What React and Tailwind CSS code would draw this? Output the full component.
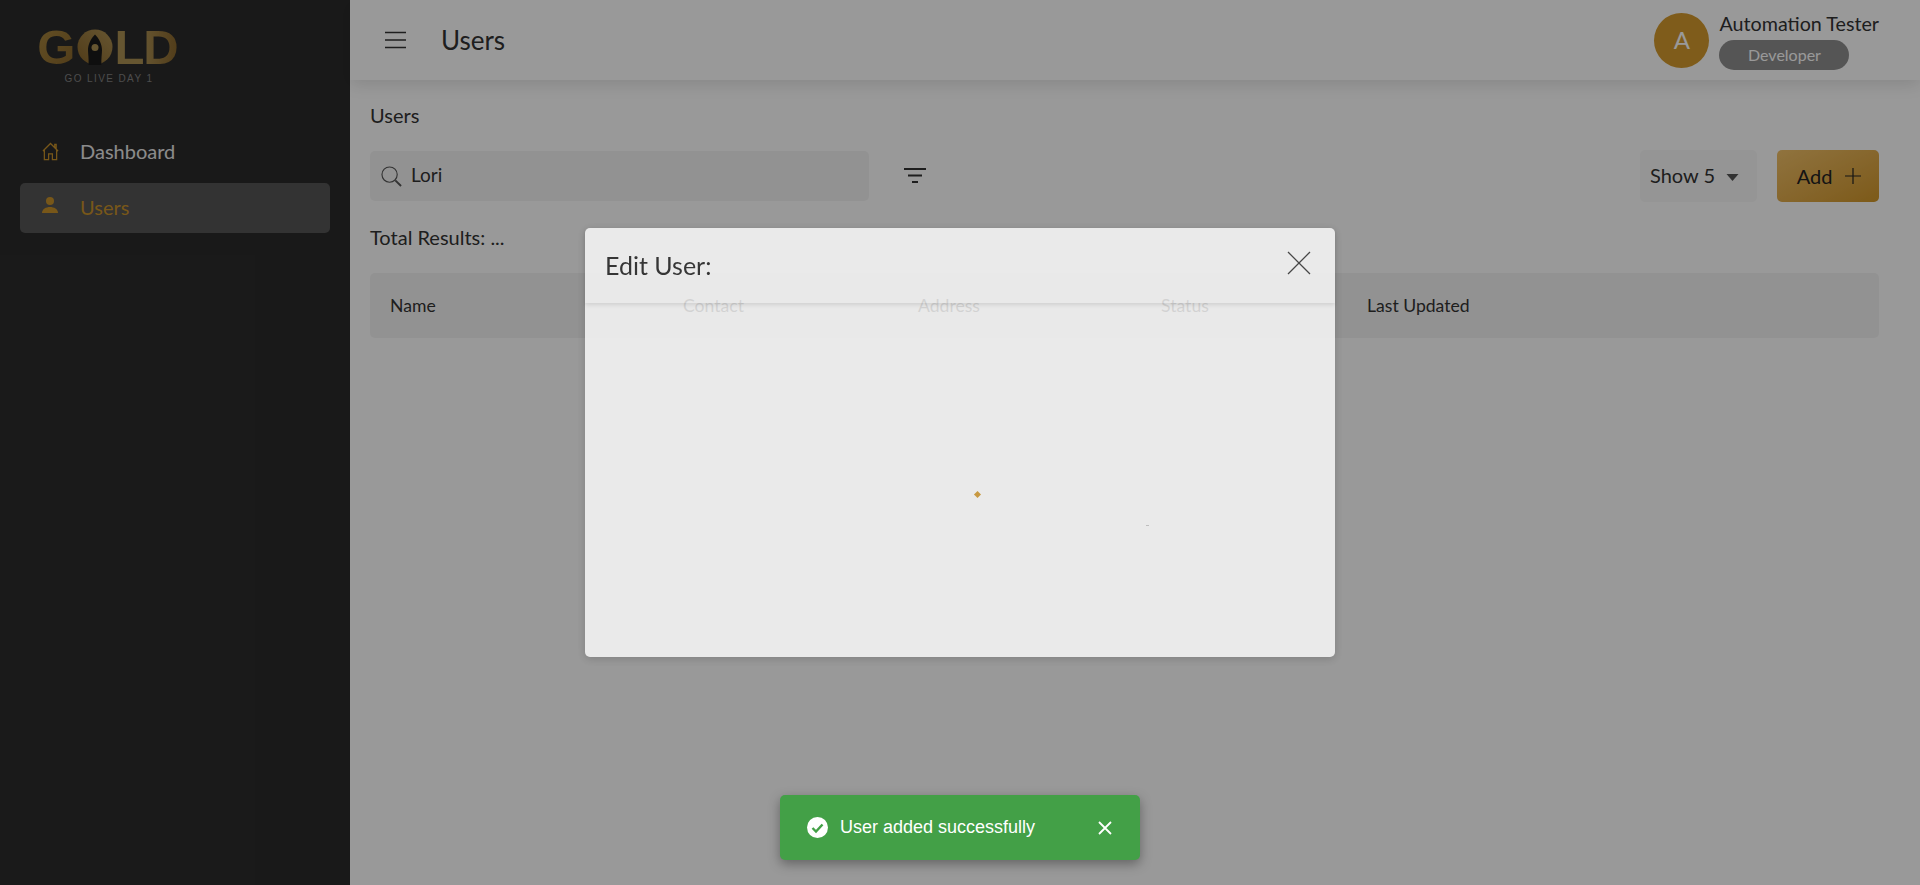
const columns = [
    { label: 'Name', width: 'w-[293px]' },
    { label: 'Contact', width: 'w-[235px]' },
    { label: 'Address', width: 'w-[243px]' },
    { label: 'Status', width: 'w-[206px]' },
    { label: 'Last Updated', width: '' },
];

function Logo() {
    return (
        <div className="flex flex-col items-center w-[138px] ml-[40px] mt-[27px]">
            <div className="flex items-center h-[40px] text-[49px] leading-none font-bold font-['Liberation_Sans',sans-serif]">
                <span className="-ml-[2px] bg-gradient-to-br from-[#a8873f] to-[#86642a] bg-clip-text text-transparent">G</span>
                <svg viewBox="0 0 36 36" className="w-[36px] h-[36px] ml-[2px] mr-[1px] shrink-0">
                    <defs>
                        <linearGradient id="logoGold" x1="0" y1="1" x2="1" y2="0">
                            <stop offset="0" stopColor="#86642a" />
                            <stop offset="1" stopColor="#ab8f52" />
                        </linearGradient>
                    </defs>
                    <circle cx="18" cy="18" r="17.5" fill="url(#logoGold)" />
                    <path d="M18 5.5C13.5 10 11 16 11 21C11 25 12 30 11.5 36H24.5C24 30 25 25 25 21C25 16 22.5 10 18 5.5Z" fill="#1a1a1a" />
                    <circle cx="18" cy="18.5" r="3.5" fill="#ab8f52" />
                </svg>
                <span className="text-[#ab8f52]">L</span>
                <span className="-ml-[1px] bg-gradient-to-l from-[#86642a] to-[#ab8f52] bg-clip-text text-transparent">D</span>
            </div>
            <div className="mt-[7px] text-[10px] leading-none tracking-[0.14em] text-[#808080] font-['Liberation_Sans',sans-serif]">
                GO LIVE DAY 1
            </div>
        </div>
    );
}

function Sidebar() {
    return (
        <aside className="w-[350px] shrink-0 bg-[#2b2b2b]">
            <Logo />
            <nav className="mt-[43px] mx-[20px]">
                <div className="flex items-center h-[50px] pl-[22px] text-[20px] text-[#e8e8e8]">
                    <svg viewBox="0 0 18 20" fill="none" stroke="#c8922a" strokeWidth="1.3" className="w-[17px] h-[19px] -mt-[2px]">
                        <path d="M1 9.5L9 1.5L17 9.5M2.5 8.5V18.5H7V12.5H11V18.5H15.5V8.5M13.5 5.5V2.5H15V7" />
                    </svg>
                    <span className="ml-[21px] -mt-[2px]">Dashboard</span>
                </div>
                <div className="flex items-center h-[50px] mt-[6px] pl-[22px] rounded-[5px] bg-[#555555] text-[20px] text-[#c8922a]">
                    <svg viewBox="0 0 16 16" fill="#c8922a" className="w-[16px] h-[16px] -mt-[6px]">
                        <circle cx="8" cy="4" r="4" />
                        <path d="M0 16C0 12 4 10 8 10C12 10 16 12 16 16Z" />
                    </svg>
                    <span className="ml-[22px] -mt-[2px]">Users</span>
                </div>
            </nav>
        </aside>
    );
}

function Header() {
    return (
        <header className="h-[80px] shrink-0 flex items-center justify-between pl-[35px] pr-[41px] bg-white shadow-[0_4px_16px_rgba(0,0,0,0.12)]">
            <div className="flex items-center">
                <svg viewBox="0 0 21 18" stroke="#333333" strokeWidth="1.7" className="w-[21px] h-[18px]">
                    <path d="M0 1.5H21M0 9H21M0 16.5H21" />
                </svg>
                <h1 className="ml-[35px] text-[26px] text-[#333333]">Users</h1>
            </div>
            <div className="flex items-center">
                <div className="w-[55px] h-[55px] rounded-full bg-[#d49a2d] text-white text-[24px] flex items-center justify-center">A</div>
                <div className="ml-[10px] mt-[1px]">
                    <div className="text-[19.7px] leading-[24px] text-[#333333]">Automation Tester</div>
                    <div className="w-[130px] h-[30px] mt-[4px] rounded-full bg-[#8e8e8e] text-white text-[16px] flex items-center justify-center">Developer</div>
                </div>
            </div>
        </header>
    );
}

function Toolbar() {
    return (
        <div className="flex items-center mt-[23px] h-[52px]">
            <div className="w-[499px] h-[50px] flex items-center pl-[11px] rounded-[5px] bg-[#f4f4f4] text-[19px] text-[#333333]">
                <svg viewBox="0 0 22 22" fill="none" stroke="#555555" strokeWidth="1.2" className="w-[21px] h-[21px]">
                    <circle cx="9" cy="9" r="8" />
                    <path d="M15 15L21 21" strokeWidth="2" />
                </svg>
                <span className="ml-[9px] -mt-[2px]">Lori</span>
            </div>
            <svg viewBox="0 0 22 15" stroke="#333333" strokeWidth="2" className="w-[22px] h-[15px] ml-[35px] -mt-[1px]">
                <path d="M0 1H22M4 7.5H18M8 14H14" />
            </svg>
            <div className="ml-auto w-[117px] h-[52px] flex items-center pl-[10px] rounded-[5px] bg-[#f9f9f9] text-[20px] text-[#333333]">
                <span className="-mt-[2px]">Show 5</span>
                <svg viewBox="0 0 12 7" fill="#555555" className="w-[13px] h-[7px] ml-[11px] mt-[2px]">
                    <path d="M0 0H12L6 7Z" />
                </svg>
            </div>
            <div className="ml-[20px] w-[102px] h-[52px] flex items-center justify-center pl-[2px] rounded-[5px] bg-gradient-to-br from-[#f0c068] to-[#d09628] text-[20px] text-[#222222]">
                Add
                <svg viewBox="0 0 16 16" stroke="#222222" strokeWidth="1.2" className="w-[16px] h-[16px] ml-[13px]">
                    <path d="M8 0V16M0 8H16" />
                </svg>
            </div>
        </div>
    );
}

function EditModal() {
    return (
        <div className="absolute left-[585px] top-[228px] w-[750px] h-[429px] rounded-[5px] bg-white opacity-[0.8] shadow-[0_2px_8px_rgba(0,0,0,0.2)]">
            <div className="h-[75px] flex items-start justify-between pl-[20px] pr-[24px] shadow-[0_2px_4px_rgba(0,0,0,0.12)]">
                <span className="mt-[22px] text-[25px] leading-[30px] text-[#1e1e1e]">Edit User:</span>
                <svg viewBox="0 0 24 24" stroke="#333333" strokeWidth="1.3" className="w-[24px] h-[24px] mt-[23px]">
                    <path d="M1 1L23 23M23 1L1 23" />
                </svg>
            </div>
            <span className="absolute left-[390px] top-[264px] w-[5px] h-[5px] rotate-45 bg-[#d49a2d]" />
            <span className="absolute left-[561px] top-[297px] w-[3px] h-px bg-[#c8c8c8]" />
        </div>
    );
}

function Toast() {
    return (
        <div className="absolute left-[780px] top-[795px] w-[360px] h-[65px] flex items-center pl-[27px] rounded-[5px] bg-[#43a047] text-white text-[18px] font-['Liberation_Sans',sans-serif] shadow-[0_4px_12px_rgba(0,0,0,0.35)]">
            <svg viewBox="0 0 21 21" className="w-[21px] h-[21px]">
                <circle cx="10.5" cy="10.5" r="10.5" fill="white" />
                <path d="M5.5 11L9 14.5L15.5 7.5" fill="none" stroke="#43a047" strokeWidth="2.4" />
            </svg>
            <span className="ml-[12px]">User added successfully</span>
            <svg viewBox="0 0 14 14" stroke="white" strokeWidth="1.8" className="w-[14px] h-[14px] ml-[63px]">
                <path d="M1 1L13 13M13 1L1 13" />
            </svg>
        </div>
    );
}

export default function App() {
    return (
        <div className="relative flex h-[885px] w-[1920px] overflow-hidden bg-white font-['Lato',sans-serif]">
            <Sidebar />

            <main className="flex-1 flex flex-col">
                <Header />

                <div className="px-[20px] pr-[41px]">
                    <div className="mt-[23px] text-[20px] leading-[24px] text-[#333333]">Users</div>
                    <Toolbar />
                    <div className="mt-[22px] text-[20px] leading-[26px] text-[#333333]">Total Results: ...</div>
                    <div className="mt-[23px] h-[65px] flex items-center pl-[20px] pt-[2px] rounded-[5px] bg-[#f4f4f4] text-[17.6px] text-[#333333]">
                        {columns.map((col) => (
                            <div key={col.label} className={col.width}>{col.label}</div>
                        ))}
                    </div>
                </div>
            </main>

            {/* overlay + modal + toast */}
            <div className="absolute inset-0 bg-black/40" />
            <EditModal />
            <Toast />
        </div>
    );
}
